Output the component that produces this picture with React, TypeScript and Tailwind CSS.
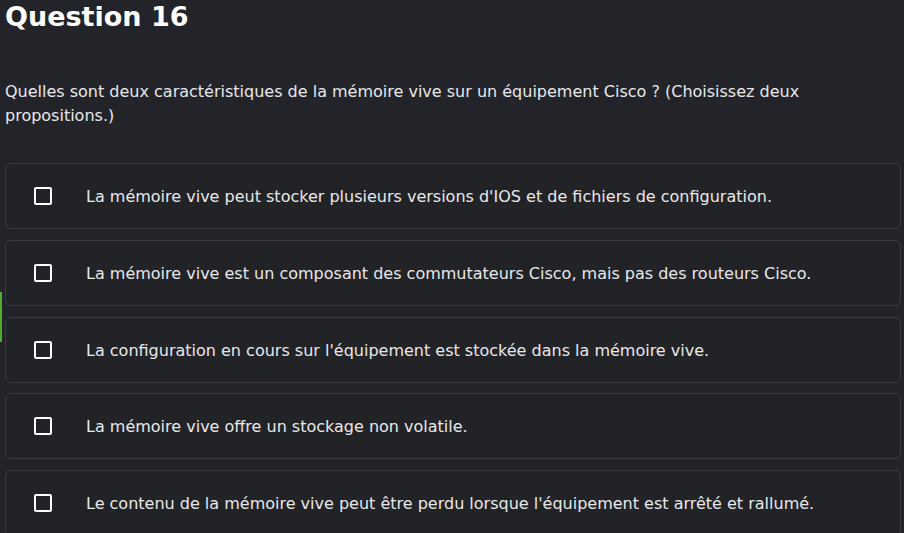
import React from "react";

const options = [
  "La mémoire vive peut stocker plusieurs versions d'IOS et de fichiers de configuration.",
  "La mémoire vive est un composant des commutateurs Cisco, mais pas des routeurs Cisco.",
  "La configuration en cours sur l'équipement est stockée dans la mémoire vive.",
  "La mémoire vive offre un stockage non volatile.",
  "Le contenu de la mémoire vive peut être perdu lorsque l'équipement est arrêté et rallumé.",
];

export default function App() {
  return (
    <div
      className="relative h-[533px] w-[904px] overflow-hidden bg-[#232429] pl-[5px] pr-[3px] text-[#e8e8ea]"
      style={{ fontFamily: '"DejaVu Sans", sans-serif' }}
    >
      <div className="absolute left-0 top-[292px] h-[50px] w-[2px] bg-[#4fae2f]" />
      <h1 className="pt-[1px] text-[27px] font-bold leading-[32px] text-white">Question 16</h1>
      <p className="mt-[47px] text-[16px] leading-[24px]">
        Quelles sont deux caractéristiques de la mémoire vive sur un équipement Cisco ? (Choisissez deux
        propositions.)
      </p>
      <div className="mt-[35px] flex flex-col gap-[10.75px]">
        {options.map((o) => (
          <div
            key={o}
            className="flex h-[66px] items-center rounded-[6px] border border-[#3b3c42] bg-[#222327]"
          >
            <div className="ml-[28px] h-[18px] w-[18px] rounded-[2px] border-2 border-white" />
            <span className="ml-[34px] mt-[2px] text-[16px]">{o}</span>
          </div>
        ))}
      </div>
    </div>
  );
}
